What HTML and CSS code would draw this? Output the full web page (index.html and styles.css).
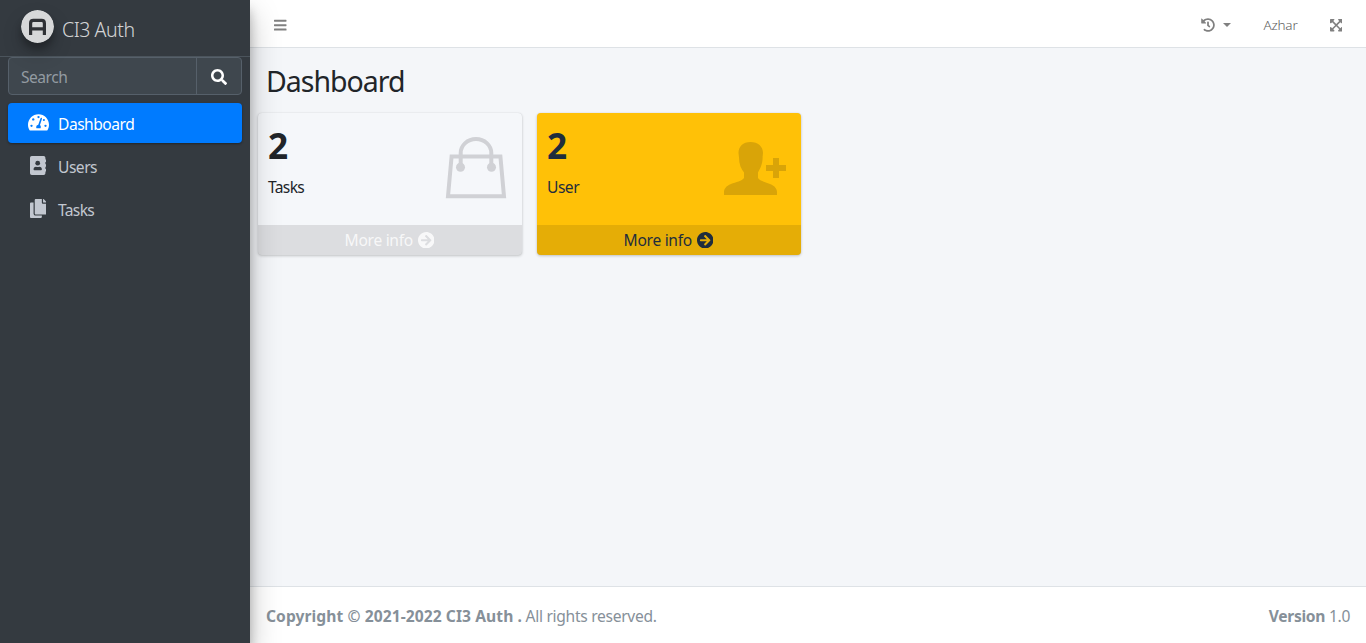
FILE: index.html
```html
<!DOCTYPE html>
<html lang="en">
<head>
<meta charset="utf-8">
<title>CI3 Auth | Dashboard</title>
<link rel="stylesheet" href="styles.css">
</head>
<body>
<div class="wrapper">
  <aside class="sidebar">
    <a class="brand">
      <svg class="brand-logo" viewBox="0 0 33 33"><circle cx="16.5" cy="16.5" r="16.5" fill="#d7d8d9"/><path d="M9.600 25V13.200Q9.600 10.400 12.400 10.400H20.600Q23.400 10.400 23.400 13.200V25M9.600 18.800H23.400" fill="none" stroke="#303236" stroke-width="3.200"/></svg>
      <span class="brand-text">CI3 Auth</span>
    </a>
    <div class="search">
      <div class="search-input"><span>Search</span></div>
      <div class="search-btn"><svg width="16" height="16" viewBox="0 0 512 512" fill="#fff"><path d="M505 442.700L405.300 343c-4.500-4.500-10.600-7-17-7H372c27.600-35.300 44-79.700 44-128C416 93.100 322.900 0 208 0S0 93.100 0 208s93.100 208 208 208c48.300 0 92.700-16.400 128-44v16.300c0 6.400 2.500 12.500 7 17l99.700 99.700c9.400 9.400 24.600 9.400 33.900 0l28.300-28.300c9.400-9.400 9.400-24.600.1-34zM208 336c-70.700 0-128-57.200-128-128 0-70.700 57.200-128 128-128 70.700 0 128 57.200 128 128 0 70.700-57.200 128-128 128z"/></svg></div>
    </div>
    <nav class="menu">
      <a class="menu-item active">
        <span class="menu-icon"><svg width="21" height="18.700" viewBox="0 0 576 512"><path fill="#fff" d="M288 32C128.940 32 0 160.940 0 320c0 52.800 14.250 102.260 39.060 144.800 5.610 9.620 16.300 15.200 27.440 15.200h443c11.140 0 21.830-5.580 27.440-15.200C561.750 422.260 576 372.800 576 320c0-159.060-128.940-288-288-288z"/><g fill="#007bff"><circle cx="288" cy="112" r="32"/><circle cx="144" cy="176" r="32"/><circle cx="96" cy="352" r="32"/><circle cx="480" cy="352" r="32"/><circle cx="436" cy="192" r="28"/><path d="M344 145Q350 126 368 129Q390 134 384 158L328 328Q352 346 352 384Q352 402 344 416H232Q224 402 224 384Q226 326 282 320Z"/></g></svg></span>
        <span>Dashboard</span>
      </a>
      <a class="menu-item">
        <span class="menu-icon"><svg width="16.600" height="19" viewBox="0 0 448 512"><path fill="#c2c7d0" d="M48 0H368Q416 0 416 48V96H436Q448 96 448 108V148Q448 160 436 160H416V224H436Q448 224 448 236V276Q448 288 436 288H416V352H436Q448 352 448 364V404Q448 416 436 416H416V464Q416 512 368 512H48Q0 512 0 464V48Q0 0 48 0Z"/><circle cx="208" cy="192" r="64" fill="#343a40"/><path fill="#343a40" d="M96 365Q96 288 163 288Q208 304 253 288Q320 288 320 365Q320 384 298 384H118Q96 384 96 365Z"/></svg></span>
        <span>Users</span>
      </a>
      <a class="menu-item">
        <span class="menu-icon"><svg width="16.600" height="19" viewBox="0 0 448 512" fill="#c2c7d0"><path d="M320 448v40c0 13.255-10.745 24-24 24H24c-13.255 0-24-10.745-24-24V120c0-13.255 10.745-24 24-24h72v296c0 30.879 25.121 56 56 56h168zm0-344V0H152c-13.255 0-24 10.745-24 24v368c0 13.255 10.745 24 24 24h272c13.255 0 24-10.745 24-24V128H344c-13.200 0-24-10.800-24-24zm120.971-31.029L375.029 7.029A24 24 0 0 0 358.059 0H352v96h96v-6.059a24 24 0 0 0-7.029-16.970z"/></svg></span>
        <span class="tight">Tasks</span>
      </a>
    </nav>
  </aside>
  <div class="page">
    <header class="navbar">
      <svg width="12.500" height="14.300" viewBox="0 0 448 512" fill="#808080"><path d="M16 132h416c8.837 0 16-7.163 16-16V76c0-8.837-7.163-16-16-16H16C7.163 60 0 67.163 0 76v40c0 8.837 7.163 16 16 16zm0 160h416c8.837 0 16-7.163 16-16v-40c0-8.837-7.163-16-16-16H16c-8.837 0-16 7.163-16 16v40c0 8.837 7.163 16 16 16zm0 160h416c8.837 0 16-7.163 16-16v-40c0-8.837-7.163-16-16-16H16c-8.837 0-16 7.163-16 16v40c0 8.837 7.163 16 16 16z"/></svg>
      <div class="nav-right">
        <span class="history"><svg width="14" height="14" viewBox="0 0 512 512" fill="#808080"><path d="M504 255.531c.253 136.640-111.180 248.372-247.820 248.468-59.015.042-113.223-20.530-155.822-54.911-11.077-8.940-11.905-25.541-1.839-35.607l11.267-11.267c8.609-8.609 22.353-9.551 31.891-1.984C173.062 425.135 212.781 440 256 440c101.705 0 184-82.311 184-184 0-101.705-82.311-184-184-184-48.814 0-93.149 18.969-126.068 49.932l50.754 50.754c10.080 10.080 2.941 27.314-11.313 27.314H24c-8.837 0-16-7.163-16-16V38.627c0-14.254 17.234-21.393 27.314-11.314l49.372 49.372C129.209 34.136 189.552 8 256 8c136.810 0 247.747 110.780 248 247.531zm-180.912 78.784l9.823-12.630c8.138-10.463 6.253-25.542-4.210-33.679L288 256.349V152c0-13.255-10.745-24-24-24h-16c-13.255 0-24 10.745-24 24v135.651l65.409 50.874c10.463 8.137 25.541 6.253 33.679-4.210z"/></svg><i class="caret"></i></span>
        <span class="user-name">Azhar</span>
        <svg width="12.500" height="14.300" viewBox="0 0 448 512" fill="#808080"><path d="M448 344v112a23.940 23.940 0 0 1-24 24H312c-21.390 0-32.090-25.900-17-41l36.200-36.200L224 295.600 116.770 402.900 153 439c15.090 15.100 4.390 41-17 41H24a23.940 23.940 0 0 1-24-24V344c0-21.400 25.890-32.100 41-17l36.190 36.200L184.460 256 77.180 148.700 41 185c-15.100 15.100-41 4.400-41-17V56a23.940 23.940 0 0 1 24-24h112c21.390 0 32.090 25.900 17 41l-36.200 36.200L224 216.400l107.230-107.300L295 73c-15.090-15.100-4.390-41 17-41h112a23.940 23.940 0 0 1 24 24v112c0 21.400-25.890 32.100-41 17l-36.190-36.200L263.540 256l107.280 107.300L407 327.100c15.100-15.200 41-4.500 41 16.900z"/></svg>
      </div>
    </header>
    <main class="content">
      <h1 class="title">Dashboard</h1>
      <div class="cards">
        <section class="card">
          <div class="card-body">
            <div><h3 class="count">2</h3><p class="label tight">Tasks</p></div>
            <svg class="bag" width="62" height="62" viewBox="0 0 62 62"><g fill="none" stroke="#d0d1d5" stroke-width="4"><path d="M6.600 19.400H55.400L59 59.200H3Z"/><path d="M15.700 29V16A15.300 14 0 0 1 46.300 16V29"/></g><g fill="#d0d1d5"><circle cx="15.500" cy="30.300" r="4.500"/><circle cx="46.500" cy="30.300" r="4.500"/></g></svg>
          </div>
          <a class="more"><span>More info</span><svg width="16.500" height="16.500" viewBox="8 8 496 496" fill="currentColor"><path d="M256 8c137 0 248 111 248 248S393 504 256 504 8 393 8 256 119 8 256 8zm-28.900 143.600l75.500 72.400H120c-13.300 0-24 10.700-24 24v16c0 13.300 10.700 24 24 24h182.600l-75.500 72.400c-9.700 9.300-9.900 24.800-.4 34.300l11 10.900c9.400 9.400 24.600 9.400 33.900 0L404.300 273c9.400-9.400 9.400-24.600 0-33.900L271.600 106.300c-9.400-9.400-24.600-9.400-33.900 0l-11 10.900c-9.500 9.600-9.300 25.100.4 34.400z"/></svg></a>
        </section>
        <section class="card warning">
          <div class="card-body">
            <div><h3 class="count">2</h3><p class="label">User</p></div>
            <svg class="person" width="62" height="54" viewBox="0 0 62 54" fill="#d9a408"><path d="M26.500 0C34 0 39 4.500 39 11C39 12.500 38.500 14 38.600 15.500C38.700 22 36 27 34 30.500V36C36 39 41 40 46 42C51 44 53 47 53 50V53H0V50C0 47 2 44 7 42C12 40 18 39 20 36V30.500C17 27 15 22 15 15.500C15 14 14.500 12.500 14.500 11C14.500 4.500 19 0 26.500 0Z"/><path d="M49 16H55V23H62V29H55V36H49V29H42V23H49Z"/></svg>
          </div>
          <a class="more"><span>More info</span><svg width="16.500" height="16.500" viewBox="8 8 496 496" fill="currentColor"><path d="M256 8c137 0 248 111 248 248S393 504 256 504 8 393 8 256 119 8 256 8zm-28.900 143.600l75.500 72.400H120c-13.300 0-24 10.700-24 24v16c0 13.300 10.700 24 24 24h182.600l-75.500 72.400c-9.700 9.300-9.900 24.800-.4 34.300l11 10.900c9.400 9.400 24.600 9.400 33.900 0L404.300 273c9.400-9.400 9.400-24.600 0-33.900L271.600 106.300c-9.400-9.400-24.600-9.400-33.900 0l-11 10.900c-9.500 9.600-9.300 25.100.4 34.400z"/></svg></a>
        </section>
      </div>
    </main>
    <footer class="footer">
      <div><strong class="copyright">Copyright © 2021-2022 CI3 Auth .</strong> <span class="rights">All rights reserved.</span></div>
      <div class="release"><b>Version</b> 1.0</div>
    </footer>
  </div>
</div>
</body>
</html>
```
FILE: styles.css
```css
* { box-sizing: border-box; }
body {
  margin: 0;
  font: 400 15.6px/24px "Noto Sans", "Open Sans", sans-serif;
  letter-spacing: -0.5px;
  color: #212529;
  background: #f4f6f9;
}
svg { display: block; flex: none; }
.wrapper { display: flex; height: 643px; overflow: hidden; }

.sidebar {
  width: 250px;
  flex: none;
  z-index: 1;
  background: #343a40;
  box-shadow: 0 14px 28px rgba(0,0,0,.25), 0 10px 10px rgba(0,0,0,.22);
}
.brand {
  display: flex;
  height: 57px;
  padding: 10px 0 0 21px;
  gap: 8px;
  border-bottom: 1px solid #4b545c;
}
.brand-logo {
  width: 33px;
  height: 33px;
  border-radius: 50%;
  box-shadow: 0 10px 20px rgba(0,0,0,.19), 0 6px 6px rgba(0,0,0,.23);
}
.brand-text {
  padding-top: 8px;
  font-size: 19.5px;
  font-weight: 300;
  letter-spacing: -0.45px;
  color: rgba(255,255,255,.8);
}
.search {
  display: flex;
  height: 38px;
  margin: 0 8px;
  border: 1px solid #56606a;
  border-radius: 4px;
  background: #3f474e;
}
.search-input { flex: 1; padding: 7px 12px; color: #939ba2; }
.search-btn {
  display: flex;
  align-items: center;
  justify-content: center;
  width: 45px;
  padding-top: 2px;
  border-left: 1px solid #56606a;
}
.menu { display: grid; gap: 3px; padding: 8px 8px 0; }
.menu-item {
  display: flex;
  align-items: center;
  height: 40px;
  padding: 2px 16px 0;
  gap: 6px;
  border-radius: 4px;
  color: #c2c7d0;
}
.menu-item.active {
  color: #fff;
  background: #007bff;
  box-shadow: 0 1px 3px rgba(0,0,0,.12), 0 1px 2px rgba(0,0,0,.24);
}
.menu-icon { display: flex; justify-content: center; width: 28px; padding-bottom: 3px; }
.tight { letter-spacing: -0.65px; }

.page { display: flex; flex: 1; flex-direction: column; }
.navbar {
  display: flex;
  align-items: center;
  justify-content: space-between;
  height: 48px;
  padding: 3px 24px 0;
  border-bottom: 1px solid #dee2e6;
  background: #fff;
}
.nav-right { display: flex; align-items: center; gap: 32px; }
.history { display: flex; align-items: center; gap: 8px; }
.caret { border: 4px solid transparent; border-top-color: #808080; border-bottom: 0; }
.user-name { padding-bottom: 1px; font-size: 13.5px; font-weight: 300; letter-spacing: -0.2px; color: #606060; }

.content { flex: 1; padding: 16px 7.5px; }
.title {
  margin: 0 0 15px 8.5px;
  font-size: 28.5px;
  font-weight: 380;
  line-height: 34px;
  letter-spacing: -1px;
}
.cards { display: flex; gap: 15px; }
.card {
  width: 264px;
  height: 142px;
  overflow: hidden;
  border-radius: 4px;
  background: #f5f7fa;
  box-shadow: 0 0 1px rgba(0,0,0,.125), 0 1px 3px rgba(0,0,0,.2);
}
.warning { color: #1f2d3d; background: #ffc107; }
.card-body { display: flex; justify-content: space-between; height: 112px; padding: 10px 9.5px 10px 10.5px; }
.count { margin: 0; font-size: 35.2px; line-height: 44px; }
.label { margin: 8px 0 0; }
.bag { margin: 14px 5px 0 0; }
.person { margin: 19px 5px 0 0; }
.more {
  display: flex;
  align-items: center;
  justify-content: center;
  height: 30px;
  gap: 5px;
  letter-spacing: -0.3px;
  color: rgba(255,255,255,.8);
  background: rgba(0,0,0,.1);
}
.warning .more { color: #1f2d3d; }

.footer {
  display: flex;
  justify-content: space-between;
  height: 57px;
  padding: 17px 16px 0;
  border-top: 1px solid #dee2e6;
  background: #fff;
  color: #869099;
}
.copyright { letter-spacing: 0.08px; }
.rights { letter-spacing: -0.3px; }
.release { letter-spacing: -0.3px; }
```
